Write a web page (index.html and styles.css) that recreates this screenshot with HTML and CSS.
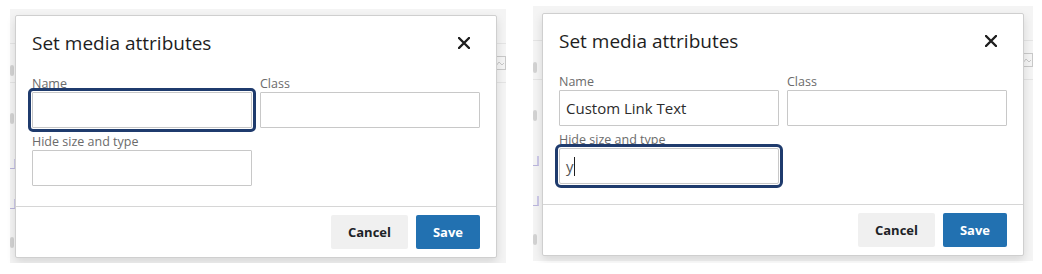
FILE: index.html
```html
<!DOCTYPE html>
<html lang="en">
<head>
  <meta charset="UTF-8" />
  <title>Set media attributes</title>
  <link rel="stylesheet" href="styles.css">
</head>
<body>
  <div class="shots">

    <!-- Empty form, Name focused -->
    <div class="backdrop left">
      <div class="peek">
        <span class="peek-line l1"></span>
        <span class="peek-line l2"></span>
        <span class="peek-bit b1"></span>
        <span class="peek-bit b2"></span>
        <span class="peek-bit link b3"></span>
        <span class="peek-bit link b4"></span>
        <span class="peek-bit b5"></span>
        <svg class="peek-icon" width="12" height="14" viewBox="0 0 12 14"><rect x="0.5" y="0.5" width="11" height="13" fill="none" stroke="#c8c8c8"/><path d="M2 10L5 6L8 9L10 7" fill="none" stroke="#c8c8c8"/></svg>
      </div>
      <div class="dialog">
        <div class="dialog-header">
          <h2>Set media attributes</h2>
          <span class="close-btn" title="Close">
            <svg width="12" height="12" viewBox="0 0 12 12"><path d="M1 1L11 11M11 1L1 11" stroke="#1e1e1e" stroke-width="2.4" stroke-linecap="round"/></svg>
          </span>
        </div>
        <div class="dialog-body">
          <label class="field">
            <span>Name</span>
            <input type="text" class="focused" value="">
          </label>
          <label class="field">
            <span>Class</span>
            <input type="text" value="">
          </label>
          <label class="field">
            <span>Hide size and type</span>
            <input type="text" value="">
          </label>
        </div>
        <div class="dialog-footer">
          <button class="btn cancel">Cancel</button>
          <button class="btn save">Save</button>
        </div>
      </div>
    </div>

    <!-- Filled form, third field focused -->
    <div class="backdrop right">
      <div class="peek">
        <span class="peek-line l1"></span>
        <span class="peek-line l2"></span>
        <span class="peek-bit b1"></span>
        <span class="peek-bit b2"></span>
        <span class="peek-bit link b3"></span>
        <span class="peek-bit link b4"></span>
        <span class="peek-bit b5"></span>
        <svg class="peek-icon" width="12" height="14" viewBox="0 0 12 14"><rect x="0.5" y="0.5" width="11" height="13" fill="none" stroke="#c8c8c8"/><path d="M2 10L5 6L8 9L10 7" fill="none" stroke="#c8c8c8"/></svg>
      </div>
      <div class="dialog">
        <div class="dialog-header">
          <h2>Set media attributes</h2>
          <span class="close-btn" title="Close">
            <svg width="12" height="12" viewBox="0 0 12 12"><path d="M1 1L11 11M11 1L1 11" stroke="#1e1e1e" stroke-width="2.4" stroke-linecap="round"/></svg>
          </span>
        </div>
        <div class="dialog-body">
          <label class="field">
            <span>Name</span>
            <input type="text" value="Custom Link Text">
          </label>
          <label class="field">
            <span>Class</span>
            <input type="text" value="">
          </label>
          <label class="field">
            <span>Hide size and type</span>
            <div class="fake-input focused">y<i class="caret"></i></div>
          </label>
        </div>
        <div class="dialog-footer">
          <button class="btn cancel">Cancel</button>
          <button class="btn save">Save</button>
        </div>
      </div>
    </div>

  </div>
</body>
</html>
```

FILE: styles.css
```css
body {
  background-color: #fff;
  margin: 0;
  padding: 0;
  font-family: "Open Sans", Arial, sans-serif;
  color: #1e1e1e;
}

.shots {
  display: flex;
  align-items: flex-start;
}

.backdrop {
  position: relative;
  background-color: #f4f4f4;
  box-sizing: border-box;
}

.backdrop.left {
  margin: 9px 0 0 10px;
  width: 496px;
  height: 254px;
  padding: 6px 0 0 5px;
}

.backdrop.right {
  margin: 6px 0 0 27px;
  width: 500px;
  height: 255px;
  padding: 7px 0 0 9px;
}

/* page content peeking out from behind the modal */
.peek {
  position: absolute;
  inset: 0;
  overflow: hidden;
}

.peek-line {
  position: absolute;
  left: 0;
  right: 0;
  height: 1px;
  background: #e4e4e4;
}

.peek-line.l1 { top: 34px; }
.peek-line.l2 { top: 73px; }

.peek-bit {
  position: absolute;
  left: 0;
  width: 4px;
  height: 11px;
  border-radius: 2px;
  background: #d2d2d2;
}

.peek-bit.b1 { top: 56px; }
.peek-bit.b2 { top: 104px; }
.peek-bit.b5 { top: 228px; }

.peek-bit.link {
  height: 9px;
  background: none;
  border-bottom: 1px solid #b9b4dc;
  border-right: 2px solid #cdc9e8;
  border-radius: 0;
}

.peek-bit.b3 { top: 150px; }
.peek-bit.b4 { top: 190px; }

.peek-icon {
  position: absolute;
  top: 47px;
  right: 0;
}

.dialog {
  position: relative;
  width: 482px;
  height: 243px;
  box-sizing: border-box;
  background: #fff;
  border: 1px solid #cfcfcf;
  border-radius: 2px;
  box-shadow: 0 4px 10px rgba(0, 0, 0, 0.12);
  display: flex;
  flex-direction: column;
}

.dialog-header {
  display: flex;
  justify-content: space-between;
  align-items: center;
  padding: 13px 26px 19px 16px;
}

.dialog-header h2 {
  margin: 0;
  font-size: 19px;
  font-weight: 400;
  line-height: 28px;
  color: #1e1e1e;
}

.close-btn {
  display: flex;
  width: 12px;
  height: 12px;
  cursor: pointer;
}

.dialog-body {
  display: grid;
  grid-template-columns: 220px 220px;
  column-gap: 8px;
  row-gap: 6px;
  padding: 0 16px 20px;
  border-bottom: 1px solid #d6d6d6;
}

.field {
  display: flex;
  flex-direction: column;
}

.field span {
  font-size: 12.5px;
  line-height: 16px;
  color: #6b6b6b;
}

.field input,
.fake-input {
  box-sizing: border-box;
  width: 220px;
  height: 36px;
  margin: 0;
  border: 1px solid #c8c8c8;
  border-radius: 1px;
  padding: 0 6px;
  font-family: "Open Sans", Arial, sans-serif;
  font-size: 15px;
  color: #2c2c2c;
  background: #fff;
}

.fake-input {
  display: flex;
  align-items: center;
  color: #555;
}

.caret {
  display: inline-block;
  width: 1px;
  height: 19px;
  background: #1e1e1e;
}

.focused {
  outline: 3px solid #1f3b6d;
  outline-offset: 1px;
  border-radius: 2px;
}

.dialog-footer {
  display: flex;
  justify-content: flex-end;
  gap: 8px;
  padding: 8px 16px 0;
}

.btn {
  height: 34px;
  border: none;
  border-radius: 2px;
  font-family: "Open Sans", Arial, sans-serif;
  font-size: 13px;
  font-weight: 700;
  cursor: pointer;
}

.btn.cancel {
  width: 77px;
  background: #f0f0f0;
  color: #1d2327;
}

.btn.save {
  width: 64px;
  background: #2271b1;
  color: #fff;
}
```
